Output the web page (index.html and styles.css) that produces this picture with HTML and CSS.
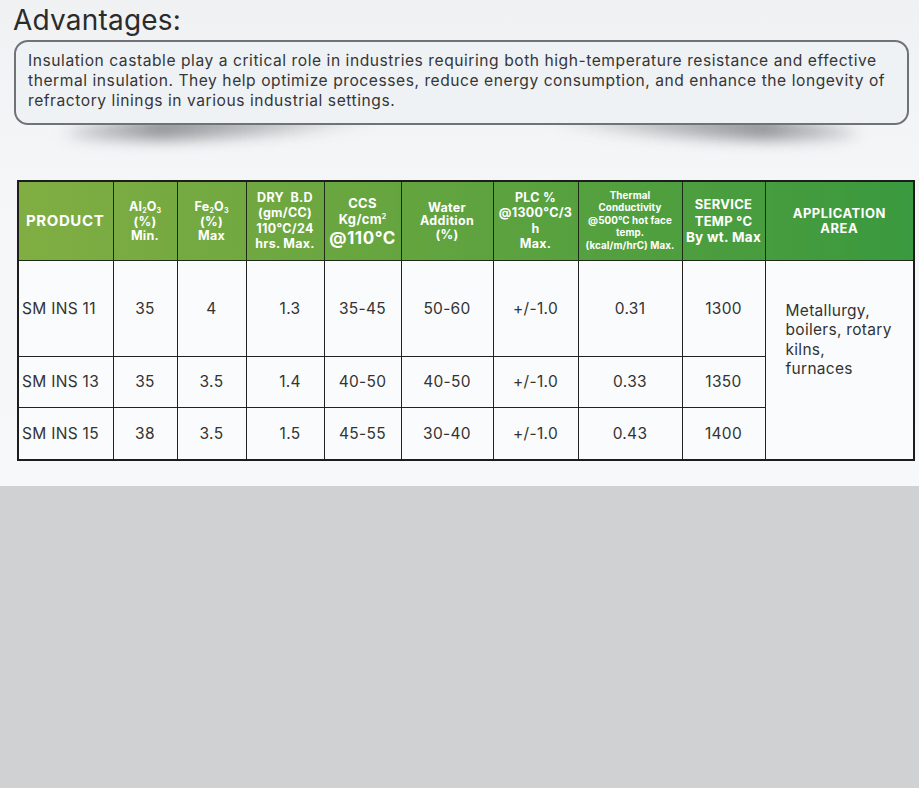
FILE: index.html
```html
<!DOCTYPE html>
<html>
<head>
<meta charset="utf-8">
<link rel="stylesheet" href="styles.css">
</head>
<body>
<div class="sheet">
  <h1 class="title">Advantages:</h1>
  <div class="note-wrap">
    <div class="shadow shadow-left"></div>
    <div class="shadow shadow-right"></div>
    <div class="note">Insulation castable play a critical role in industries requiring both high-temperature resistance and effective thermal insulation. They help optimize processes, reduce energy consumption, and enhance the longevity of refractory linings in various industrial settings.</div>
  </div>
  <table class="spec">
    <colgroup>
      <col class="c1"><col class="c2"><col class="c3"><col class="c4"><col class="c5"><col class="c6"><col class="c7"><col class="c8"><col class="c9"><col class="c10">
    </colgroup>
    <thead>
      <tr>
        <th class="h-product">PRODUCT</th>
        <th>Al<span class="sb">2</span>O<span class="sb">3</span><br>(%)<br>Min.</th>
        <th>Fe<span class="sb">2</span>O<span class="sb">3</span><br>(%)<br>Max</th>
        <th class="h-dry">DRY&nbsp; B.D<br>(gm/CC)<br>110°C/24<br>hrs. Max.</th>
        <th class="h-ccs">CCS<br>Kg/cm<span class="sp">2</span><br><span class="big">@110°C</span></th>
        <th>Water<br>Addition<br>(%)</th>
        <th class="h-plc">PLC %<br>@1300°C/3<br>h<br>Max.</th>
        <th class="h-thermal">Thermal<br>Conductivity<br>@500°C hot face<br>temp.<br>(kcal/m/hrC) Max.</th>
        <th class="h-service">SERVICE<br>TEMP °C<br><span class="mid">By wt. Max</span></th>
        <th class="h-app">APPLICATION<br>AREA</th>
      </tr>
    </thead>
    <tbody>
      <tr class="r1">
        <td class="prod">SM INS 11</td><td>35</td><td>4</td><td class="dry">1.3</td><td>35-45</td><td>50-60</td><td>+/-1.0</td><td>0.31</td><td>1300</td>
        <td class="app" rowspan="3">Metallurgy,<br>boilers, rotary<br>kilns,<br>furnaces</td>
      </tr>
      <tr class="r2">
        <td class="prod">SM INS 13</td><td>35</td><td>3.5</td><td class="dry">1.4</td><td>40-50</td><td>40-50</td><td>+/-1.0</td><td>0.33</td><td>1350</td>
      </tr>
      <tr class="r3">
        <td class="prod">SM INS 15</td><td>38</td><td>3.5</td><td class="dry">1.5</td><td>45-55</td><td>30-40</td><td>+/-1.0</td><td>0.43</td><td>1400</td>
      </tr>
    </tbody>
  </table>
</div>
<div class="footer-band"></div>
</body>
</html>
```
FILE: styles.css
```css
* { box-sizing: border-box; }
html, body { margin: 0; padding: 0; }
body {
  width: 919px;
  height: 788px;
  background: #d0d1d3;
  font-family: "Inter", "Noto Sans", sans-serif;
  color: #333;
  overflow: hidden;
}
.sheet {
  height: 486px;
  background: linear-gradient(180deg, #eff1f3 0%, #f5f6f7 40%, #f7f8f9 100%);
  padding: 1px 0 0 0;
}
.title {
  margin: 2px 0 0 13px;
  font-weight: 400;
  font-size: 28px;
  line-height: 34px;
  color: #2b2b2b;
  letter-spacing: 0.2px;
}
.note-wrap {
  position: relative;
  margin: 3px 10px 0 14px;
}
.note {
  position: relative;
  z-index: 2;
  height: 85px;
  border: 2px solid #6f7375;
  border-radius: 14px;
  background: #eff2f5;
  padding: 9px 6px 0 12px;
  font-size: 15.6px;
  line-height: 20px;
  color: #363636;
  letter-spacing: 0.55px;
}
.shadow {
  position: absolute;
  z-index: 1;
  top: 72px;
  height: 26px;
  width: 320px;
  border-radius: 50%;
  filter: blur(7px);
}
.shadow-left {
  left: 50px;
  transform: rotate(-3deg);
  background: linear-gradient(90deg, rgba(90,90,105,0.18) 0%, rgba(70,72,80,0.55) 30%, rgba(80,82,86,0.3) 65%, rgba(100,100,100,0) 100%);
}
.shadow-right {
  right: 50px;
  transform: rotate(3deg);
  background: linear-gradient(270deg, rgba(90,90,105,0.18) 0%, rgba(70,72,80,0.55) 30%, rgba(80,82,86,0.3) 65%, rgba(100,100,100,0) 100%);
}

.spec {
  margin: 55px 0 0 17px;
  width: 896px;
  border-collapse: collapse;
  table-layout: fixed;
  border: 2px solid #1d1d1d;
}
.c1 { width: 95px; } .c2 { width: 64px; } .c3 { width: 69px; } .c4 { width: 78px; }
.c5 { width: 77px; } .c6 { width: 92px; } .c7 { width: 85px; } .c8 { width: 104px; }
.c9 { width: 83px; } .c10 { width: 149px; }

.spec thead tr {
  background: linear-gradient(90deg, #80ae43 0%, #6ea740 30%, #58a13f 60%, #3a993e 100%);
  height: 79px;
}
.spec th {
  border: 1.5px solid #1d2a18;
  color: #fff;
  font-weight: 700;
  font-size: 12.5px;
  line-height: 13.5px;
  letter-spacing: 0.3px;
  padding: 0 1px;
  text-align: center;
  vertical-align: middle;
}
.sb, .sp { font-size: 7px; letter-spacing: 0; position: relative; }
.sb { top: 2px; }
.sp { top: -5px; }
.h-product { font-size: 15px !important; text-align: left !important; padding-left: 7px !important; letter-spacing: 0.6px !important; }
.h-dry { line-height: 15.5px !important; }
.h-ccs { line-height: 16px !important; font-size: 13px !important; }
.h-ccs .big { font-size: 17px; letter-spacing: 0.5px; }
.h-plc { line-height: 15.5px !important; }
.h-thermal { font-size: 9.8px !important; line-height: 12.5px !important; padding: 0 !important; letter-spacing: 0.1px !important; }
.h-service { font-size: 13px !important; line-height: 16.5px !important; }
.h-service .mid { font-size: 13.5px; }
.h-app { font-size: 13px !important; line-height: 15px !important; letter-spacing: 0.5px !important; }

.spec tbody tr { background: #fafbfc; }
.r1 { height: 96px; }
.r2 { height: 51px; }
.r3 { height: 53px; }
.spec td {
  border: 1.5px solid #222;
  font-size: 15.5px;
  letter-spacing: 0.3px;
  color: #333;
  text-align: center;
  vertical-align: middle;
  padding: 0;
  white-space: nowrap;
}
.spec td.prod { text-align: left; padding-left: 3px; }
.spec td.dry { padding-left: 10px; }
.spec td.app {
  text-align: left;
  vertical-align: top;
  padding: 40px 0 0 20px;
  line-height: 19.5px;
  white-space: normal;
}
.footer-band { height: 302px; background: #d0d1d3; }
```
